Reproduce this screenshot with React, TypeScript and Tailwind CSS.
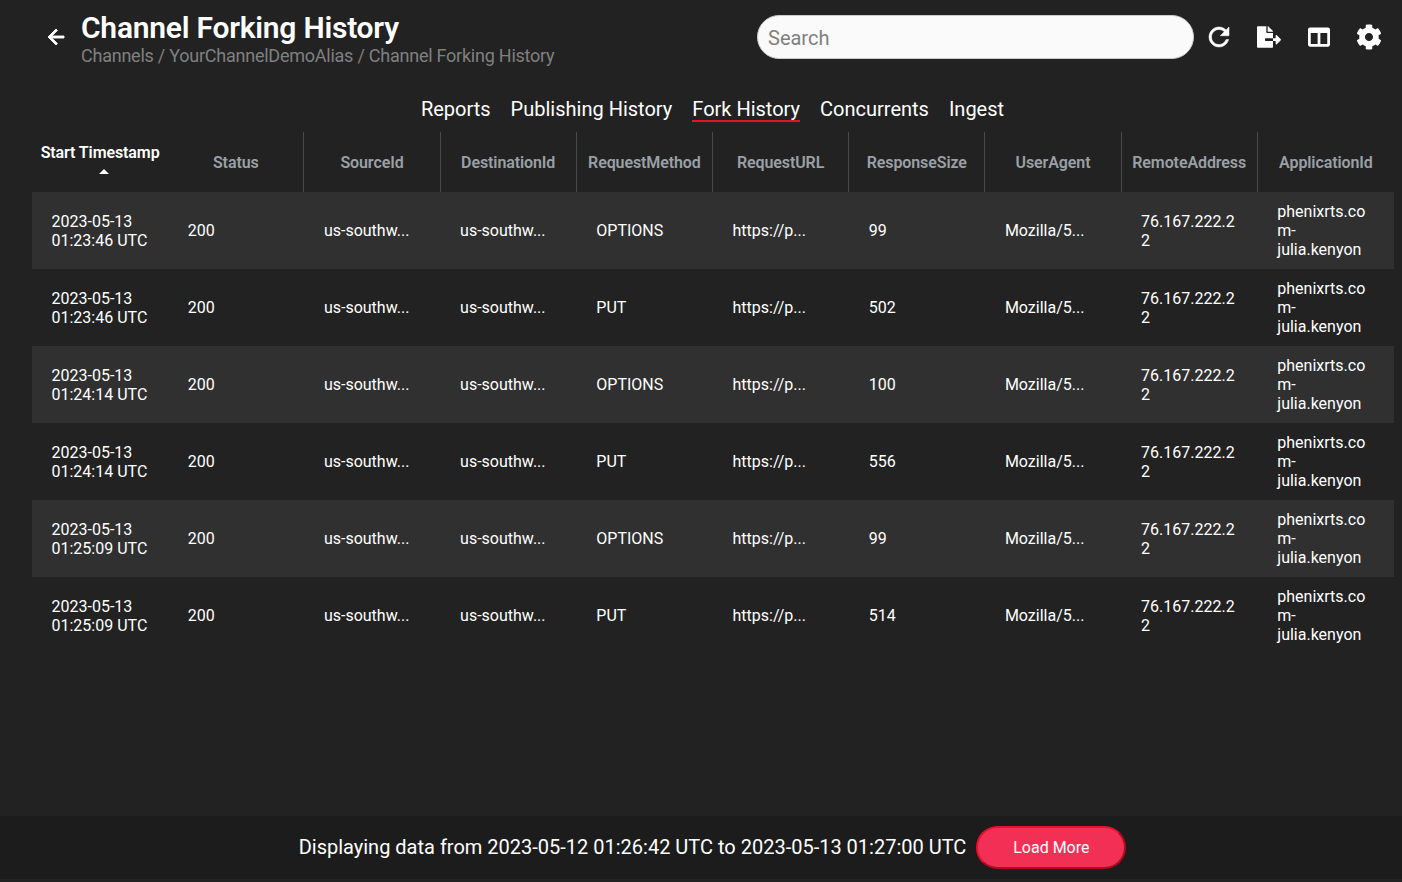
import React from 'react'
import { FaFileExport, FaColumns, FaCog } from 'react-icons/fa'

const COLUMNS = ['Start Timestamp', 'Status', 'SourceId', 'DestinationId', 'RequestMethod', 'RequestURL', 'ResponseSize', 'UserAgent', 'RemoteAddress', 'ApplicationId']

const ROWS = [
  { date: '2023-05-13', time: '01:23:46 UTC', method: 'OPTIONS', size: '99' },
  { date: '2023-05-13', time: '01:23:46 UTC', method: 'PUT', size: '502' },
  { date: '2023-05-13', time: '01:24:14 UTC', method: 'OPTIONS', size: '100' },
  { date: '2023-05-13', time: '01:24:14 UTC', method: 'PUT', size: '556' },
  { date: '2023-05-13', time: '01:25:09 UTC', method: 'OPTIONS', size: '99' },
  { date: '2023-05-13', time: '01:25:09 UTC', method: 'PUT', size: '514' },
]

const TABS = ['Reports', 'Publishing History', 'Fork History', 'Concurrents', 'Ingest']

const Cell: React.FC<{ children: React.ReactNode }> = ({ children }) => (
  <div className="flex items-center px-5 leading-[19px] min-w-0">
    <div className="min-w-0 w-full break-words">{children}</div>
  </div>
)

export default function App() {
  return (
    <div className="h-[882px] flex flex-col bg-[#222222] text-white overflow-hidden text-base" style={{ fontFamily: 'Roboto, sans-serif' }}>
      {/* header */}
      <div className="h-[76px] flex items-start shrink-0">
        <div className="w-[81px] shrink-0 flex justify-end pr-[13px] pt-[25px]">
          <svg width="24" height="24" viewBox="0 0 24 24" fill="#ffffff" stroke="#ffffff" strokeWidth="0.9">
            <path d="M20 11H7.83l5.59-5.59L12 4l-8 8 8 8 1.41-1.41L7.83 13H20z" />
          </svg>
        </div>
        <div className="pt-[10px] flex-1">
          <h1 className="text-[30px] leading-[35px] font-semibold tracking-[-0.24px]">Channel Forking History</h1>
          <p className="text-lg leading-[21px] text-[#808080] tracking-[-0.24px]">Channels / YourChannelDemoAlias / Channel Forking History</p>
        </div>
        <div className="flex items-center pt-[15px]">
          <div className="w-[437px] h-[44px] rounded-[22px] bg-[#fafafa] border border-[#cccccc] flex items-center pl-[10px] pt-[1px] text-[20px] text-[#808080]">Search</div>
          <div className="w-[50px] flex justify-center">
            <svg width="30" height="30" viewBox="0 0 24 24" fill="#ffffff" stroke="#ffffff" strokeWidth="0.4">
              <path d="M17.65 6.35C16.2 4.9 14.21 4 12 4c-4.42 0-7.99 3.58-7.99 8s3.57 8 7.99 8c3.73 0 6.84-2.55 7.73-6h-2.08c-.82 2.33-3.04 4-5.65 4-3.31 0-6-2.69-6-6s2.69-6 6-6c1.66 0 3.14.69 4.22 1.78L13 11h7V4l-2.35 2.35z" />
            </svg>
          </div>
          <div className="w-[50px] flex justify-center"><FaFileExport size={24} /></div>
          <div className="w-[50px] flex justify-center"><FaColumns size={22} /></div>
          <div className="w-[50px] flex justify-center"><FaCog size={26} /></div>
          <div className="w-[8px]" />
        </div>
      </div>

      {/* tabs */}
      <div className="h-[56px] flex justify-center gap-5 pt-[21px] pl-[23px] shrink-0">
        {TABS.map(t => (
          <div key={t} className={`text-[20px] leading-[24px] h-[25px] ${t === 'Fork History' ? 'border-b-2 border-[#e8112d]' : ''}`}>{t}</div>
        ))}
      </div>

      {/* table */}
      <div className="flex-1 ml-[31.5px] w-[1362px]">
        <div className="grid grid-cols-10 h-[60px] ml-[0.5px] w-[1362px]">
          {COLUMNS.map((c, i) => (
            <div key={c} className={`flex flex-col items-center whitespace-nowrap font-semibold ${i === 0 ? 'text-white pt-[11px]' : 'text-[#9aa0a6] pt-[21px]'} ${i > 0 && i < 9 ? 'border-r border-[#4a4a4a]' : ''}`}>
              <span className="leading-[20px] tracking-[-0.1px]">{c}</span>
              {i === 0 && <span className="w-0 h-0 mt-[6px] ml-[8px] border-x-[5px] border-x-transparent border-b-[5px] border-b-white" />}
            </div>
          ))}
        </div>
        {ROWS.map((r, i) => (
          <div key={i} className={`grid grid-cols-10 h-[77px] ${i % 2 === 0 ? 'bg-[#303030]' : ''}`}>
            <Cell>{r.date}<br />{r.time}</Cell>
            <Cell>200</Cell>
            <Cell>us-southw...</Cell>
            <Cell>us-southw...</Cell>
            <Cell>{r.method}</Cell>
            <Cell>https://p...</Cell>
            <Cell>{r.size}</Cell>
            <Cell>Mozilla/5...</Cell>
            <Cell>76.167.222.22</Cell>
            <Cell>phenixrts.com-julia.kenyon</Cell>
          </div>
        ))}
      </div>

      {/* footer */}
      <div className="h-[63px] mb-[3px] shrink-0 bg-[#1c1c1c] flex items-center justify-center gap-[10px] pl-[23px]">
        <span className="text-[20px] pb-[2px]">Displaying data from 2023-05-12 01:26:42 UTC to 2023-05-13 01:27:00 UTC</span>
        <button className="w-[150px] h-[43px] rounded-[22px] bg-[#f23055] border-2 border-t-[#e8112d] border-l-[#e8112d] border-r-[#b00c20] border-b-[#b00c20] text-white text-base">Load More</button>
      </div>
    </div>
  )
}
